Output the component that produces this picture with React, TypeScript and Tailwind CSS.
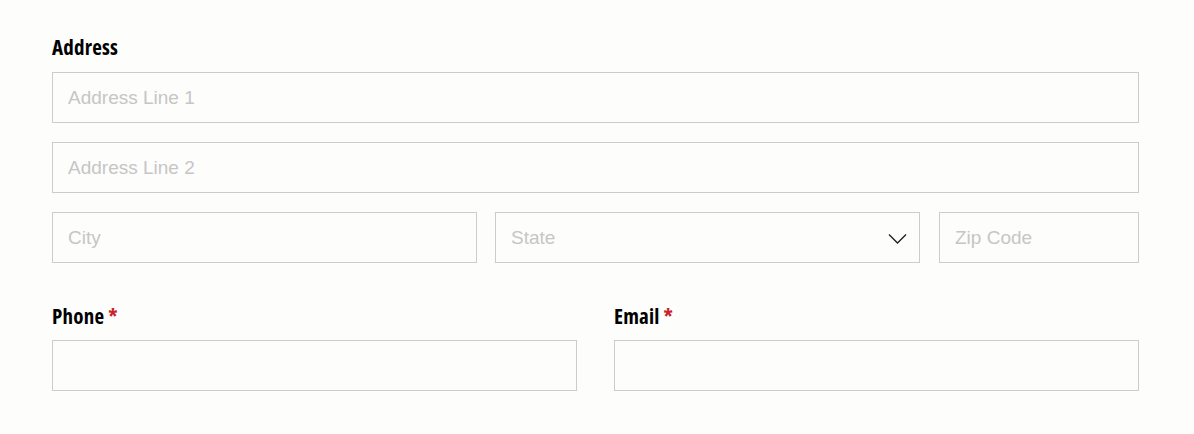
import React from "react";

const inputCls =
  "h-[51px] w-full border border-[#cccccc] bg-[#fdfdfc] px-[15px] text-[19px] text-[#333] placeholder:text-[#c6c6c6] outline-none font-['Liberation_Sans',Arial,sans-serif]";

const labelCls =
  "block h-6 text-[21px] leading-6 font-bold text-black font-['Open_Sans',sans-serif] [font-stretch:75%] tracking-[0.2px]";

export default function App() {
  return (
    <div className="min-h-[434px] w-[1194px] bg-[#fdfdfc] pl-[52px] pr-[55px] pt-[35px]">
      <label className={`${labelCls} mb-[13px]`}>Address</label>
      <div className="flex flex-col gap-[19px]">
        <input className={inputCls} placeholder="Address Line 1" />
        <input className={inputCls} placeholder="Address Line 2" />
        <div className="flex">
          <input className={`${inputCls} !w-[425px]`} placeholder="City" />
          <div className="relative ml-[18px] w-[425px]">
            <select
              defaultValue=""
              className={`${inputCls} appearance-none pt-[1px] text-[#c6c6c6]`}
            >
              <option value="" disabled>
                State
              </option>
            </select>
            <svg
              className="pointer-events-none absolute right-[13px] top-[21px]"
              width="19"
              height="11"
              viewBox="0 0 19 11"
              fill="none"
            >
              <path d="M1 1.5l8.5 8.5L18 1.5" stroke="#222" strokeWidth="1.4" />
            </svg>
          </div>
          <input className={`${inputCls} ml-[19px] !w-[200px]`} placeholder="Zip Code" />
        </div>
      </div>

      <div className="mt-[41px] flex gap-[37px]">
        <div className="w-[525px]">
          <label className={`${labelCls} mb-3`}>
            Phone <span className="text-[#c8232c]">*</span>
          </label>
          <input className={inputCls} />
        </div>
        <div className="w-[525px]">
          <label className={`${labelCls} mb-3`}>
            Email <span className="text-[#c8232c]">*</span>
          </label>
          <input className={inputCls} />
        </div>
      </div>
    </div>
  );
}
